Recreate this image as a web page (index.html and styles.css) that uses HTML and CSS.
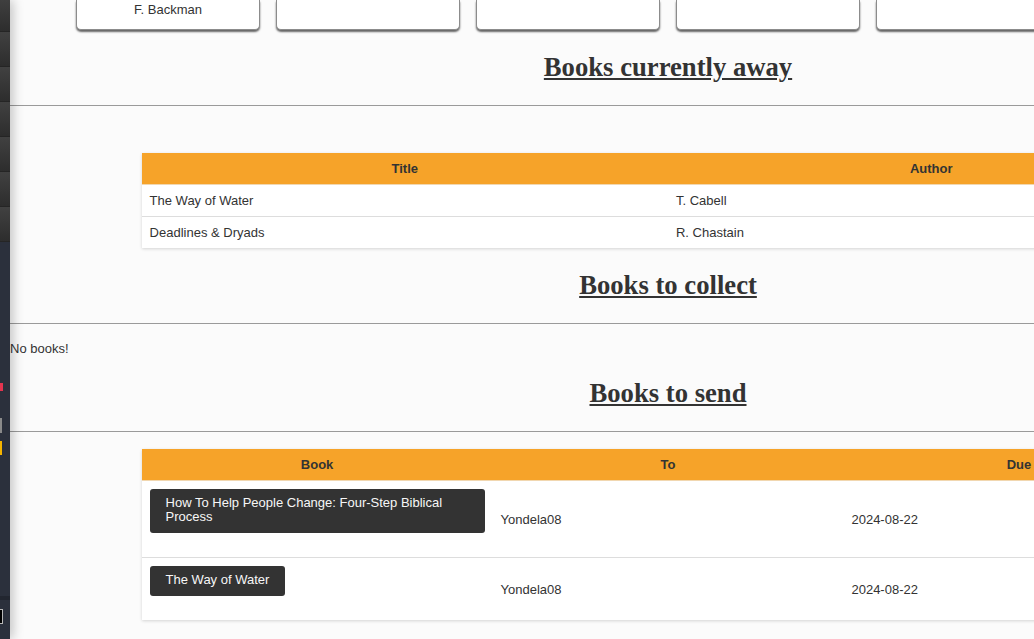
FILE: index.html
```html
<!DOCTYPE html>
<html lang="en">
<head>
<meta charset="utf-8">
<title>Books</title>
<link rel="stylesheet" href="styles.css">
</head>
<body>
<aside class="sidebar">
  <div class="nav">
    <div class="nav-item"></div>
    <div class="nav-item"></div>
    <div class="nav-item"></div>
    <div class="nav-item"></div>
    <div class="nav-item"></div>
    <div class="nav-item"></div>
    <div class="nav-item"></div>
  </div>
  <div class="side-rest">
    <span class="mark mark-red"></span>
    <span class="mark mark-grey"></span>
    <span class="mark mark-yellow"></span>
    <span class="side-line"></span>
    <span class="side-box"></span>
  </div>
</aside>
<main class="main">
  <div class="cards">
    <div class="card">F. Backman</div>
    <div class="card"></div>
    <div class="card"></div>
    <div class="card"></div>
    <div class="card"></div>
  </div>

  <section class="section">
    <h2 class="section-title">Books currently away</h2>
    <hr class="rule">
    <table class="tbl tbl-away">
      <thead>
        <tr><th>Title</th><th>Author</th></tr>
      </thead>
      <tbody>
        <tr><td>The Way of Water</td><td>T. Cabell</td></tr>
        <tr><td>Deadlines &amp; Dryads</td><td>R. Chastain</td></tr>
      </tbody>
    </table>
  </section>

  <section class="section">
    <h2 class="section-title">Books to collect</h2>
    <hr class="rule">
    <p class="empty">No books!</p>
  </section>

  <section class="section">
    <h2 class="section-title">Books to send</h2>
    <hr class="rule">
    <table class="tbl tbl-send">
      <thead>
        <tr><th>Book</th><th>To</th><th>Due</th></tr>
      </thead>
      <tbody>
        <tr>
          <td><span class="book-btn">How To Help People Change: Four-Step Biblical Process</span></td>
          <td>Yondela08</td>
          <td>2024-08-22</td>
        </tr>
        <tr>
          <td><span class="book-btn">The Way of Water</span></td>
          <td>Yondela08</td>
          <td>2024-08-22</td>
        </tr>
      </tbody>
    </table>
  </section>
</main>
</body>
</html>
```

FILE: styles.css
```css
html, body {
  margin: 0;
  padding: 0;
  overflow: hidden;
  height: 100%;
}

body {
  display: flex;
  align-items: stretch;
  background: #fbfbfb;
  font-family: "Liberation Sans", Arial, sans-serif;
  font-size: 13px;
  color: #333;
}

.sidebar {
  flex: 0 0 10px;
  width: 10px;
  background: #2b303c;
  position: relative;
  z-index: 2;
  box-shadow: 2px 0 12px rgba(0, 0, 0, 0.28);
  display: flex;
  flex-direction: column;
  overflow: hidden;
}

.nav {
  margin-top: -3px;
  display: flex;
  flex-direction: column;
}

.nav-item {
  height: 34px;
  border-bottom: 1px solid #252525;
  background: linear-gradient(#414141, #2d2d2d);
}

.side-rest {
  display: flex;
  flex-direction: column;
  align-items: flex-start;
}

.mark {
  display: block;
}

.mark-red {
  margin-top: 141px;
  width: 3px;
  height: 8px;
  background: #e3344f;
}

.mark-grey {
  margin-top: 27px;
  width: 2px;
  height: 15px;
  background: #8a8a8a;
}

.mark-yellow {
  margin-top: 8px;
  width: 2px;
  height: 14px;
  background: #f5b400;
}

.side-line {
  display: block;
  margin-top: 141px;
  width: 10px;
  height: 4px;
  background: #222630;
}

.side-box {
  display: block;
  margin-top: 9px;
  width: 2px;
  height: 13px;
  background: #000;
  border: 1px solid #b8b8b8;
  border-left: none;
}

.main {
  flex: 0 0 1316px;
  width: 1316px;
}

.cards {
  display: flex;
  gap: 16px;
  padding-left: 66px;
}

.card {
  flex: 0 0 184px;
  box-sizing: border-box;
  height: 30px;
  padding-top: 2px;
  line-height: 15px;
  text-align: center;
  background: #fff;
  border: 1px solid #8c8c8c;
  border-top: none;
  border-radius: 0 0 5px 5px;
  box-shadow: 0 2px 2px rgba(0, 0, 0, 0.6);
}

.section-title {
  font-family: "Liberation Serif", "Times New Roman", serif;
  font-size: 26.67px;
  font-weight: bold;
  line-height: 31px;
  text-decoration: underline;
  text-align: center;
  color: #333;
  margin: 22px 0;
}

.rule {
  border: none;
  height: 1px;
  background: #9a9a9a;
  margin: 1px 0 17px;
}

.empty {
  margin: 0 0 1px;
  line-height: 15px;
}

.tbl {
  width: 80%;
  margin: 0 auto;
  border-collapse: collapse;
  table-layout: fixed;
  background: #fff;
  box-shadow: 0 1px 3px rgba(0, 0, 0, 0.16);
}

.tbl-away {
  margin-top: 47px;
}

.tbl th {
  background: #f6a329;
  color: #333;
  font-weight: bold;
  text-align: center;
  padding: 8px;
  line-height: 15px;
  border-bottom: 1px solid #f1d7b0;
}

.tbl td {
  padding: 8px;
  line-height: 15px;
  text-align: left;
  vertical-align: middle;
}

.tbl tbody tr + tr td {
  border-top: 1px solid #dddddd;
}

.book-btn {
  display: inline-block;
  background: #333;
  color: #f7f7f7;
  border-radius: 3px;
  padding: 7px 16px 9px;
  line-height: 14px;
  margin-bottom: 16px;
  vertical-align: top;
}
```
